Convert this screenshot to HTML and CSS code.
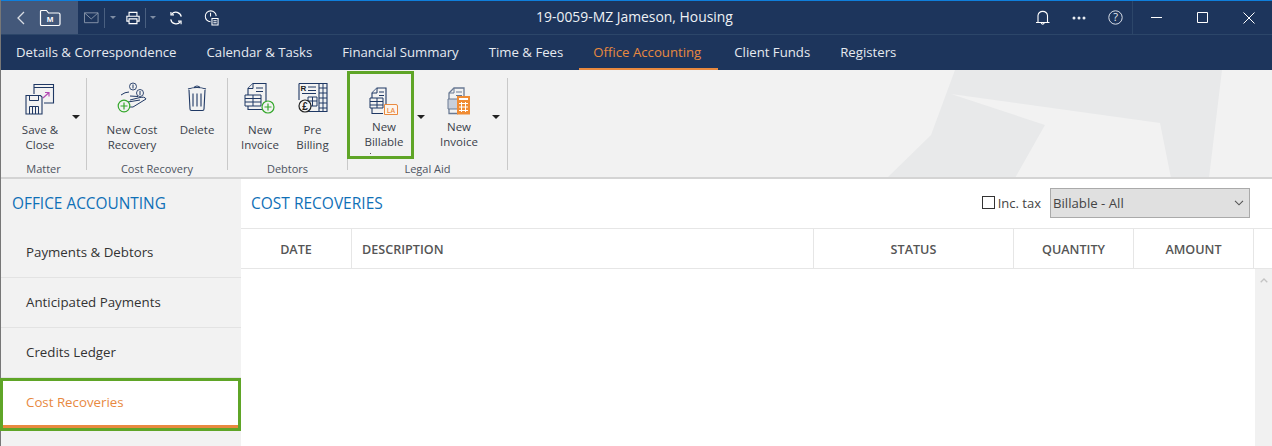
FILE: index.html
```html
<!DOCTYPE html>
<html lang="en">
<head>
<meta charset="utf-8">
<title>19-0059-MZ Jameson, Housing</title>
<link rel="stylesheet" href="styles.css">
</head>
<body>
<div class="app">
  <header class="titlebar">
    <div class="nav-block">
      <svg class="ic" width="12" height="16" viewBox="0 0 12 16"><path d="M9 2 3 8l6 6" fill="none" stroke="#fff" stroke-opacity=".8" stroke-width="1.3"/></svg>
      <svg class="ic" width="22" height="18" viewBox="0 0 22 18"><path d="M1.500 15V2.500q0-1 1-1h5l2 2.500h10q1.500 0 1.500 1.500V15q0 1.500-1.500 1.500h-17q-1 0-1-1.500z" fill="none" stroke="#fff" stroke-width="1.200"/><text x="11" y="13" class="m-letter">M</text></svg>
    </div>
    <div class="tools">
      <svg class="ic" width="15" height="12" viewBox="0 0 16 12"><path d="M.5.5h14.500v10.500H.5zM.5.500 7.700 7 15 .5" fill="none" stroke="#8795aa" stroke-width="1"/></svg>
      <span class="tool-sep"></span>
      <span class="caret dim c1"></span>
      <svg class="ic print" width="14" height="14" viewBox="0 0 16 15"><path d="M3.500 5V1h9v4M3.500 11H1V5.500h14V11h-2.500M3.500 8.500h9v5.500h-9z" fill="none" stroke="#fff" stroke-width="1.300"/></svg>
      <span class="tool-sep"></span>
      <span class="caret dim c2"></span>
      <svg class="ic sync" width="14" height="14" viewBox="0 0 16 16"><path d="M14 6.500A6.300 6.300 0 0 0 3 3.500M2 9.500a6.300 6.300 0 0 0 11 3" fill="none" stroke="#fff" stroke-width="1.400"/><path d="M2.200 1v3.500h3.500M13.800 15v-3.500h-3.500" fill="none" stroke="#fff" stroke-width="1.300"/></svg>
      <svg class="ic clock" width="15" height="16" viewBox="0 0 16 17"><path d="M7 12.500a5.800 5.800 0 1 1 6-6M7 3v4" fill="none" stroke="#fff" stroke-width="1.100"/><path d="M8.500 9h6.500v7H8.500zM10 11.500h3.500M10 13.500h3.500" fill="none" stroke="#fff" stroke-width="1.100"/></svg>
    </div>
    <div class="title">19-0059-MZ Jameson, Housing</div>
    <div class="actions">
      <svg class="ic" width="14" height="15" viewBox="0 0 14 15"><path d="M0 12.500h13.500M2 12.500V5.500a4.800 4.800 0 0 1 9.500 0v7M5 12.500q1.700 3.500 3.500 0" fill="none" stroke="#fff" stroke-width="1.100"/></svg>
      <svg class="ic" width="14" height="4" viewBox="0 0 14 4"><circle cx="2" cy="2" r="1.500" fill="#e8ecf2"/><circle cx="7" cy="2" r="1.500" fill="#e8ecf2"/><circle cx="12" cy="2" r="1.500" fill="#e8ecf2"/></svg>
      <svg class="ic" width="15" height="15" viewBox="0 0 15 15"><circle cx="7.500" cy="7.500" r="6.700" fill="none" stroke="#d8dee8" stroke-width="1"/><text x="7.500" y="11.200" class="q-letter">?</text></svg>
    </div>
    <div class="win-controls">
      <svg class="ic" width="11" height="1" viewBox="0 0 11 1"><path d="M0 .5h11" stroke="#fff"/></svg>
      <svg class="ic" width="11" height="11" viewBox="0 0 11 11"><path d="M.5.500h10v10H.5z" fill="none" stroke="#fff"/></svg>
      <svg class="ic" width="12" height="12" viewBox="0 0 12 12"><path d="m.5.500 11 11M11.500.500l-11 11" fill="none" stroke="#fff"/></svg>
    </div>
  </header>

  <nav class="tabs">
    <a class="tab">Details &amp; Correspondence</a>
    <a class="tab">Calendar &amp; Tasks</a>
    <a class="tab">Financial Summary</a>
    <a class="tab">Time &amp; Fees</a>
    <a class="tab active">Office Accounting</a>
    <a class="tab">Client Funds</a>
    <a class="tab">Registers</a>
  </nav>

  <section class="ribbon">
    <svg class="ribbon-bg" viewBox="0 0 1272 108" width="1272" height="108"><path d="M955 0h267l-13 108h-38l-11-55-209-29 94 31-30 53H887l44-43z" fill="#e8e9ea"/></svg>

    <div class="group g-matter">
      <div class="btns">
        <div class="btn b-save">
          <svg class="big" width="30" height="32" viewBox="0 0 30 32"><path d="M9 11V1.500h19.500V20H19" fill="none" stroke="#1f3864" stroke-width="1.100"/><path d="M9 4.500h19.500" stroke="#1f3864"/><path d="m18 15 6-5.500M20 9.500h4v4" fill="none" stroke="#b44bb4" stroke-width="1.200"/><path d="M1 12.500h14.500l1.500 1.500v17H1z" fill="#f2f2f2" stroke="#1f3864" stroke-width="1.100"/><path d="M4.500 12.500v5h9v-5M4.500 31v-7.500h9V31M7.500 24v7M10.500 24v7" fill="none" stroke="#1f3864"/></svg>
          <span class="lbl">Save &amp;<br>Close</span>
        </div>
        <span class="caret drop d-save"></span>
      </div>
      <div class="glabel">Matter</div>
    </div>

    <div class="group g-cost">
      <div class="btns">
        <div class="btn b-newcost">
          <svg class="big" width="30" height="32" viewBox="0 0 30 32"><circle cx="16" cy="4.500" r="3.500" fill="none" stroke="#1f3864" stroke-width=".9"/><path d="M16 2.500v4" stroke="#1f3864"/><circle cx="23" cy="11" r="3.500" fill="none" stroke="#1f3864" stroke-width=".9"/><path d="M23 9v4" stroke="#1f3864"/><path d="M4 13q4-3 8-3M13 18l8-2q7-2 8 1l-13 8H11M13 14l8 .5M11 20l12-2" fill="none" stroke="#1f3864" stroke-width="1"/><circle cx="7" cy="24" r="5.800" fill="#f2f2f2" stroke="#35a82c" stroke-width="1.200"/><path d="M3.500 24h7M7 20.500v7" stroke="#35a82c" stroke-width="1.200"/></svg>
          <span class="lbl">New Cost<br>Recovery</span>
        </div>
        <div class="btn b-delete">
          <svg class="big" width="20" height="30" viewBox="0 0 20 30"><path d="M1 6q9-3 18 0M7 4.500q3-3 6 0M2 7l1 19q0 1.500 1.500 1.500h11q1.500 0 1.500-1.500l1-19M6 10.500v13M10 10.500v13M14 10.500v13" fill="none" stroke="#1f3864" stroke-width="1.100"/></svg>
          <span class="lbl">Delete</span>
        </div>
      </div>
      <div class="glabel">Cost Recovery</div>
    </div>

    <div class="group g-debtors">
      <div class="btns">
        <div class="btn b-inv">
          <svg class="big" width="32" height="32" viewBox="0 0 32 32"><path d="M22 20V1.500H9l-5 5v21h14" fill="none" stroke="#1f3864" stroke-width="1.100"/><path d="M9 1.500v5H4M12 6h7M12 9.500h7M1 13h16v11H1zM1 16.500h16M1 20h16M9 13v11" fill="#f2f2f2" stroke="#1f3864"/><circle cx="24" cy="25" r="6" fill="#f2f2f2" stroke="#35a82c" stroke-width="1.200"/><path d="M20.500 25h7M24 21.500v7" stroke="#35a82c" stroke-width="1.200"/></svg>
          <span class="lbl">New<br>Invoice</span>
        </div>
        <div class="btn b-pre">
          <svg class="big" width="30" height="32" viewBox="0 0 30 32"><path d="M1 1.500h20v28H10M21 1.500h8v28h-8M1 1.500V18" fill="none" stroke="#1f3864" stroke-width="1.100"/><path d="M25 1.500v28M21 6h8M21 11h8M21 16h8M21 21h8M21 26h8M10 5h8M10 8.500h8M4 11.500h14M10 15h9v9h-9zM10 19h9M14.500 15v9" fill="none" stroke="#1f3864"/><text x="5.500" y="9" class="r-letter">R</text><circle cx="7" cy="24" r="6" fill="#f2f2f2" stroke="#222" stroke-width="1.200"/><text x="7" y="27.500" class="p-letter">£</text></svg>
          <span class="lbl">Pre<br>Billing</span>
        </div>
      </div>
      <div class="glabel">Debtors</div>
    </div>

    <div class="group g-legal">
      <div class="btns">
        <div class="btn b-bill">
          <svg class="big" width="28" height="28" viewBox="0 0 28 28"><path d="M16 20V1H7L2 6v20.500h11" fill="none" stroke="#1f3864" stroke-width="1.100"/><path d="M7 1v5H2M9 5h5M9 8.500h5M0 11h13v10H0zM0 14.500h13M0 18h13M7 11v10" fill="#f2f2f2" stroke="#1f3864"/><path d="M14.500 17.500h11.500q1.500 0 1.500 1.500v8.500h-13z" fill="#fdf4ec" stroke="#ea8a3f"/><text x="21" y="25.500" class="la-letter">LA</text></svg>
          <span class="lbl">New<br>Billable</span>
        </div>
        <span class="caret drop d-bill"></span>
        <div class="btn b-linv">
          <svg class="big" width="24" height="28" viewBox="0 0 24 28"><path d="M17 14V1H7L2 6v20.500h9" fill="#f2f2f2" stroke="#6a7a94" stroke-width="1.300"/><path d="M7 1v5H2M9 5h6M9 8.500h6" fill="none" stroke="#6a7a94"/><path d="M1 12h10v10H1z" fill="#c8cfda" stroke="#6a7a94"/><rect x="10" y="9" width="13" height="18.500" fill="#f08c34"/><path d="M12 12h9" stroke="#fff" stroke-width="2"/><path d="M12 16.500h9M12 20h9M12 23.500h9M14.500 15v10M18.500 15v10" stroke="#fff"/></svg>
          <span class="lbl">New<br>Invoice</span>
        </div>
        <span class="caret drop d-linv"></span>
      </div>
      <div class="glabel">Legal Aid</div>
      <div class="hl-billable"></div>
      <span class="clip-dot"></span>
    </div>
  </section>

  <div class="body">
    <aside class="side">
      <h2 class="side-head">OFFICE ACCOUNTING</h2>
      <ul class="side-list">
        <li class="side-item">Payments &amp; Debtors</li>
        <li class="side-item">Anticipated Payments</li>
        <li class="side-item">Credits Ledger</li>
        <li class="side-item current">Cost Recoveries</li>
      </ul>
    </aside>
    <main class="main">
      <div class="main-head">
        <h2 class="main-title">COST RECOVERIES</h2>
        <label class="inc"><span class="check"></span>Inc. tax</label>
        <div class="select">
          <span>Billable - All</span>
          <svg width="10" height="6" viewBox="0 0 10 6"><path d="m1 .8 4 4 4-4" fill="none" stroke="#555" stroke-width="1.100"/></svg>
        </div>
      </div>
      <div class="thead">
        <div class="th c-date">DATE</div>
        <div class="th c-desc">DESCRIPTION</div>
        <div class="th c-status">STATUS</div>
        <div class="th c-qty">QUANTITY</div>
        <div class="th c-amt">AMOUNT</div>
      </div>
      <div class="tbody">
        <div class="scroll">
          <svg width="8" height="5" viewBox="0 0 8 5"><path d="m.7 4.300 3.300-3.300 3.300 3.300" fill="none" stroke="#c4c4c4" stroke-width="1.300"/></svg>
        </div>
      </div>
    </main>
  </div>
</div>
</body>
</html>
```

FILE: styles.css
```css
* { box-sizing: border-box; }
html, body { margin: 0; padding: 0; height: 100%; overflow: hidden; }
body { font-family: "Open Sans", "Noto Sans", sans-serif; font-size: 12px; color: #333; background: #fff; }
h2, ul { margin: 0; padding: 0; }
.app { width: 1272px; height: 446px; display: flex; flex-direction: column; border-left: 1px solid #777; }
.ic { display: block; flex: none; }
svg { overflow: visible; }

/* title bar */
.titlebar { height: 35px; flex: none; display: flex; align-items: center; background: #1d355c; border-top: 1px solid #0f7fdc; border-bottom: 1px solid #2c4669; color: #fff; position: relative; }
.nav-block { width: 77px; height: 100%; background: #43587a; display: flex; align-items: center; padding-left: 14px; gap: 12px; flex: none; }
.m-letter { font-family: "Liberation Sans", sans-serif; font-size: 8px; font-weight: 700; fill: #fff; text-anchor: middle; }
.q-letter { font-family: "Open Sans", sans-serif; font-size: 11px; fill: #e8ecf2; text-anchor: middle; }
.r-letter { font-family: "Liberation Sans", sans-serif; font-size: 8px; font-weight: 700; fill: #222; text-anchor: middle; }
.p-letter { font-family: "Liberation Sans", sans-serif; font-size: 10px; font-weight: 700; fill: #222; text-anchor: middle; }
.la-letter { font-family: "Open Sans", sans-serif; font-size: 7px; font-weight: 600; fill: #ea8a3f; text-anchor: middle; }
.tools { display: flex; align-items: center; padding-left: 6px; height: 100%; }
.tool-sep { width: 1px; height: 20px; background: #4a6080; margin-left: 5px; }
.caret { width: 0; height: 0; border-left: 4px solid transparent; border-right: 4px solid transparent; border-top: 4px solid #222; flex: none; }
.caret.dim { border-left-width: 3px; border-right-width: 3px; border-top-width: 3px; border-top-color: #7f8da3; }
.c1 { margin-left: 5px; }
.c2 { margin-left: 4px; }
.print { margin-left: 10px; }
.sync { margin-left: 13px; }
.clock { margin-left: 21px; }
.title { position: absolute; left: -4px; right: 0; top: 7px; text-align: center; font-size: 13.900px; line-height: 18px; color: #eef1f5; pointer-events: none; }
.actions { margin-left: auto; display: flex; align-items: center; gap: 22px; padding-right: 9px; }
.win-controls { width: 140px; height: 100%; display: flex; align-items: center; justify-content: space-between; border-left: 1px solid #2c4669; padding: 0 17px 0 18px; flex: none; }

/* tabs */
.tabs { height: 35px; flex: none; display: flex; background: #1d355c; padding-left: 1px; }
.tab { padding: 0 14px; margin-right: 2px; height: 35px; line-height: 35px; font-size: 13.200px; color: #e6eaf0; white-space: nowrap; }
.tab.active { color: #e8893f; border-bottom: 2px solid #e8893f; padding-right: 17px; }

/* ribbon */
.ribbon { height: 109px; flex: none; display: flex; background: #f2f2f2; border-bottom: 2px solid #d4d4d4; position: relative; overflow: hidden; padding-top: 8px; }
.ribbon-bg { position: absolute; left: -1px; top: 0; }
.group { position: relative; display: flex; flex-direction: column; border-right: 1px solid #c9c9c9; height: 92px; flex: none; }
.g-matter { width: 86px; }
.g-cost { width: 141px; }
.g-debtors { width: 120px; }
.g-legal { width: 160px; }
.btns { flex: 1; display: flex; position: relative; }
.btn { display: flex; flex-direction: column; align-items: center; text-align: center; flex: none; color: #3a3f4a; }
.big { display: block; flex: none; }
.lbl { font-size: 11.500px; line-height: 15px; white-space: nowrap; }
.glabel { position: absolute; left: 0; right: 0; top: 84px; text-align: center; font-size: 11px; line-height: 14px; color: #4d5360; }

.b-save { width: 78px; padding-top: 5px; }
.b-save .lbl { margin-top: 7px; }
.b-newcost { width: 88px; padding-top: 4px; margin-left: 1px; }
.b-newcost .lbl { margin-top: 8px; }
.b-delete { width: 42px; padding-top: 5px; }
.b-delete .lbl { margin-top: 9px; }
.b-inv { width: 58px; padding-top: 4px; margin-left: 3px; }
.b-inv .lbl { margin-top: 8px; }
.b-pre { width: 47px; padding-top: 4px; }
.b-pre .lbl { margin-top: 8px; }
.b-bill { width: 66px; padding-top: 9px; padding-left: 4px; margin-left: 1px; }
.b-bill .lbl { margin-top: 4px; }
.b-linv { width: 66px; padding-top: 9px; margin-left: 1px; }
.b-linv .lbl { margin-top: 4px; }
.drop { margin-top: 37px; }
.d-save { margin-left: -7px; }
.d-bill { margin-left: 2px; }
.d-linv { margin-left: 0; }
.hl-billable { position: absolute; left: -1px; top: -7px; width: 67px; height: 88px; border: 3px solid #5fa527; pointer-events: none; }
.clip-dot { position: absolute; left: 22px; top: 75px; width: 1px; height: 1px; background: #555; }

/* body */
.body { flex: 1; display: flex; min-height: 0; }
.side { width: 240px; flex: none; background: #f2f2f2; }
.side-head { font-size: 15.400px; font-weight: 400; color: #0f70b7; height: 49px; line-height: 49px; padding-left: 11px; }
.side-list { list-style: none; }
.side-item { height: 50px; line-height: 48px; padding-left: 25px; font-size: 13.300px; color: #333; border-bottom: 1px solid #e3e3e3; }
.side-item.current { height: 53px; margin-left: -1px; padding-left: 23px; line-height: 43px; background: #fff; color: #e8893f; border: 3px solid #5fa527; box-shadow: inset 0 -3px 0 #e8893f; }

.main { flex: 1; min-width: 0; display: flex; flex-direction: column; }
.main-head { height: 50px; flex: none; display: flex; align-items: center; padding: 0 22px 2px 10px; border-bottom: 1px solid #e6e6e6; }
.main-title { font-size: 15.500px; font-weight: 400; color: #0f70b7; margin-right: auto; }
.inc { display: flex; align-items: center; gap: 3px; font-size: 13px; color: #444; margin-right: 9px; }
.check { width: 13px; height: 13px; border: 1px solid #333; background: #fff; }
.select { width: 200px; height: 30px; background: #e0e0e0; border: 1px solid #aaa; display: flex; align-items: center; justify-content: space-between; padding: 0 5px 0 2px; font-size: 13.200px; color: #444; }
.thead { height: 40px; flex: none; display: flex; border-bottom: 1px solid #e6e6e6; padding-right: 18px; }
.th { font-size: 12.600px; font-weight: 600; line-height: 41px; color: #555; border-right: 1px solid #e6e6e6; text-align: center; white-space: nowrap; }
.c-date { width: 111px; }
.c-desc { width: 462px; text-align: left; padding-left: 10px; }
.c-status { width: 200px; }
.c-qty { width: 120px; }
.c-amt { width: 120px; }
.tbody { flex: 1; display: flex; justify-content: flex-end; min-height: 0; }
.scroll { width: 17px; background: #f1f1f1; display: flex; justify-content: center; padding-top: 9px; }
.scroll svg { display: block; }
```
